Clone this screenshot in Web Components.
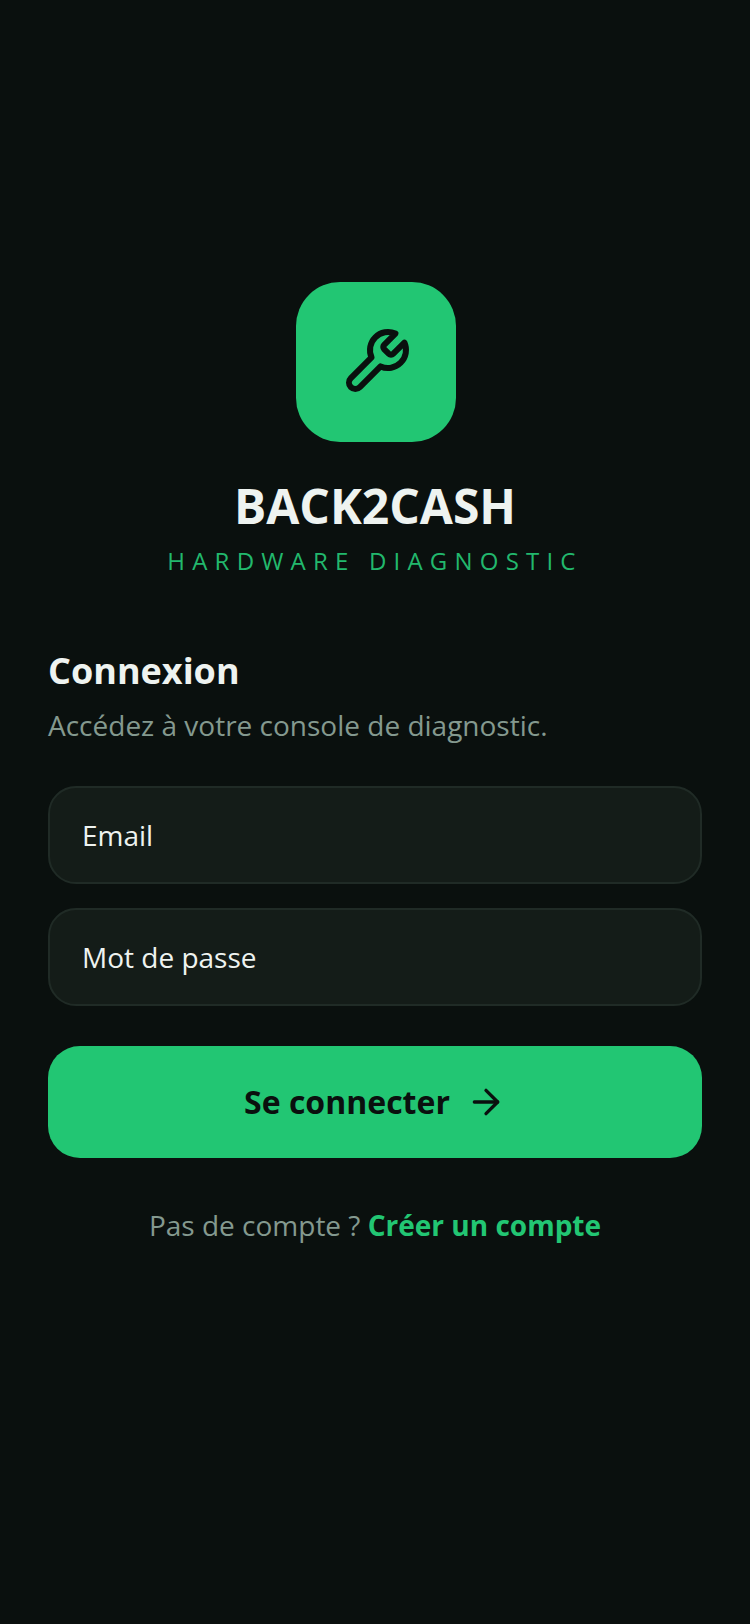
<!DOCTYPE html>
<html lang="fr">
<head>
<meta charset="utf-8">
<title>Back2Cash</title>
<style>
  html, body { margin: 0; height: 100%; background: #0a100e; }
  body { font-family: "Open Sans", sans-serif; }
</style>
</head>
<body>
<login-screen>
  <brand-header></brand-header>
  <login-form></login-form>
</login-screen>

<script>
class LoginScreen extends HTMLElement {
  constructor() {
    super();
    const shadow = this.attachShadow({ mode: 'open' });
    shadow.innerHTML = `
      <style>
        :host {
          display: flex;
          flex-direction: column;
          height: 1624px;
          box-sizing: border-box;
          padding: 282px 48px 0;
          background: #0a100e;
        }
      </style>
      <slot></slot>
    `;
  }
}

class BrandHeader extends HTMLElement {
  constructor() {
    super();
    const shadow = this.attachShadow({ mode: 'open' });
    shadow.innerHTML = `
      <style>
        :host {
          display: flex;
          flex-direction: column;
          align-items: center;
        }
        .logo {
          width: 160px;
          height: 160px;
          border-radius: 44px;
          background: #22c673;
          display: flex;
          align-items: center;
          justify-content: center;
          margin: 0 0 34px 2px;
        }
        .logo svg { width: 72px; height: 72px; }
        h1 {
          margin: 0;
          font-size: 48px;
          line-height: 60px;
          font-weight: 700;
          color: #eef3f0;
        }
        p {
          margin: 9px 0 0;
          font-size: 24px;
          line-height: 32px;
          letter-spacing: 7.2px;
          color: #22b86d;
        }
      </style>
      <div class="logo">
        <svg viewBox="0 0 24 24" fill="none" stroke="#0a100e" stroke-width="2" stroke-linecap="round" stroke-linejoin="round">
          <path d="M14.7 6.3a1 1 0 0 0 0 1.4l1.6 1.6a1 1 0 0 0 1.4 0l3.77-3.77a6 6 0 0 1-7.94 7.94l-6.91 6.91a2.12 2.12 0 0 1-3-3l6.91-6.91a6 6 0 0 1 7.94-7.94l-3.76 3.76z"/>
        </svg>
      </div>
      <h1>BACK2CASH</h1>
      <p>HARDWARE DIAGNOSTIC</p>
    `;
  }
}

class TextField extends HTMLElement {
  constructor() {
    super();
    const shadow = this.attachShadow({ mode: 'open' });
    shadow.innerHTML = `
      <style>
        :host {
          display: flex;
          align-items: center;
          height: 98px;
          box-sizing: border-box;
          padding: 0 32px;
          border: 2px solid #202b26;
          border-radius: 28px;
          background: #141c18;
          font-size: 28px;
          color: #eef3f0;
        }
      </style>
      <slot></slot>
    `;
  }
}

class PrimaryButton extends HTMLElement {
  constructor() {
    super();
    const shadow = this.attachShadow({ mode: 'open' });
    shadow.innerHTML = `
      <style>
        :host {
          display: flex;
          align-items: center;
          justify-content: center;
          gap: 16px;
          height: 112px;
          border-radius: 32px;
          background: #22c673;
          font-size: 32px;
          font-weight: 700;
          color: #0a100e;
        }
        .label { margin-bottom: 2px; }
        svg { width: 40px; height: 40px; }
      </style>
      <span class="label"><slot></slot></span>
      <svg viewBox="0 0 24 24" fill="none" stroke="#0a100e" stroke-width="2" stroke-linecap="round" stroke-linejoin="round">
        <path d="M5 12h14"/><path d="m12 5 7 7-7 7"/>
      </svg>
    `;
  }
}

class LoginForm extends HTMLElement {
  constructor() {
    super();
    const shadow = this.attachShadow({ mode: 'open' });
    shadow.innerHTML = `
      <style>
        :host {
          display: flex;
          flex-direction: column;
          margin-top: 70px;
        }
        h2 {
          margin: 0;
          font-size: 36px;
          line-height: 48px;
          font-weight: 700;
          color: #eef3f0;
        }
        .sub {
          margin: 10px 0 0;
          font-size: 28px;
          line-height: 40px;
          color: #84998f;
        }
        .fields {
          display: flex;
          flex-direction: column;
          gap: 24px;
          margin-top: 41px;
        }
        primary-button { margin-top: 40px; }
        .footer {
          margin: 47px 0 0;
          text-align: center;
          font-size: 28px;
          line-height: 40px;
          color: #84998f;
        }
        .footer b { color: #22c673; font-weight: 700; }
      </style>
      <h2>Connexion</h2>
      <p class="sub">Accédez à votre console de diagnostic.</p>
      <div class="fields">
        <text-field>Email</text-field>
        <text-field>Mot de passe</text-field>
      </div>
      <primary-button>Se connecter</primary-button>
      <p class="footer">Pas de compte ? <b>Créer un compte</b></p>
    `;
  }
}

customElements.define('login-screen', LoginScreen);
customElements.define('brand-header', BrandHeader);
customElements.define('text-field', TextField);
customElements.define('primary-button', PrimaryButton);
customElements.define('login-form', LoginForm);
</script>
</body>
</html>
